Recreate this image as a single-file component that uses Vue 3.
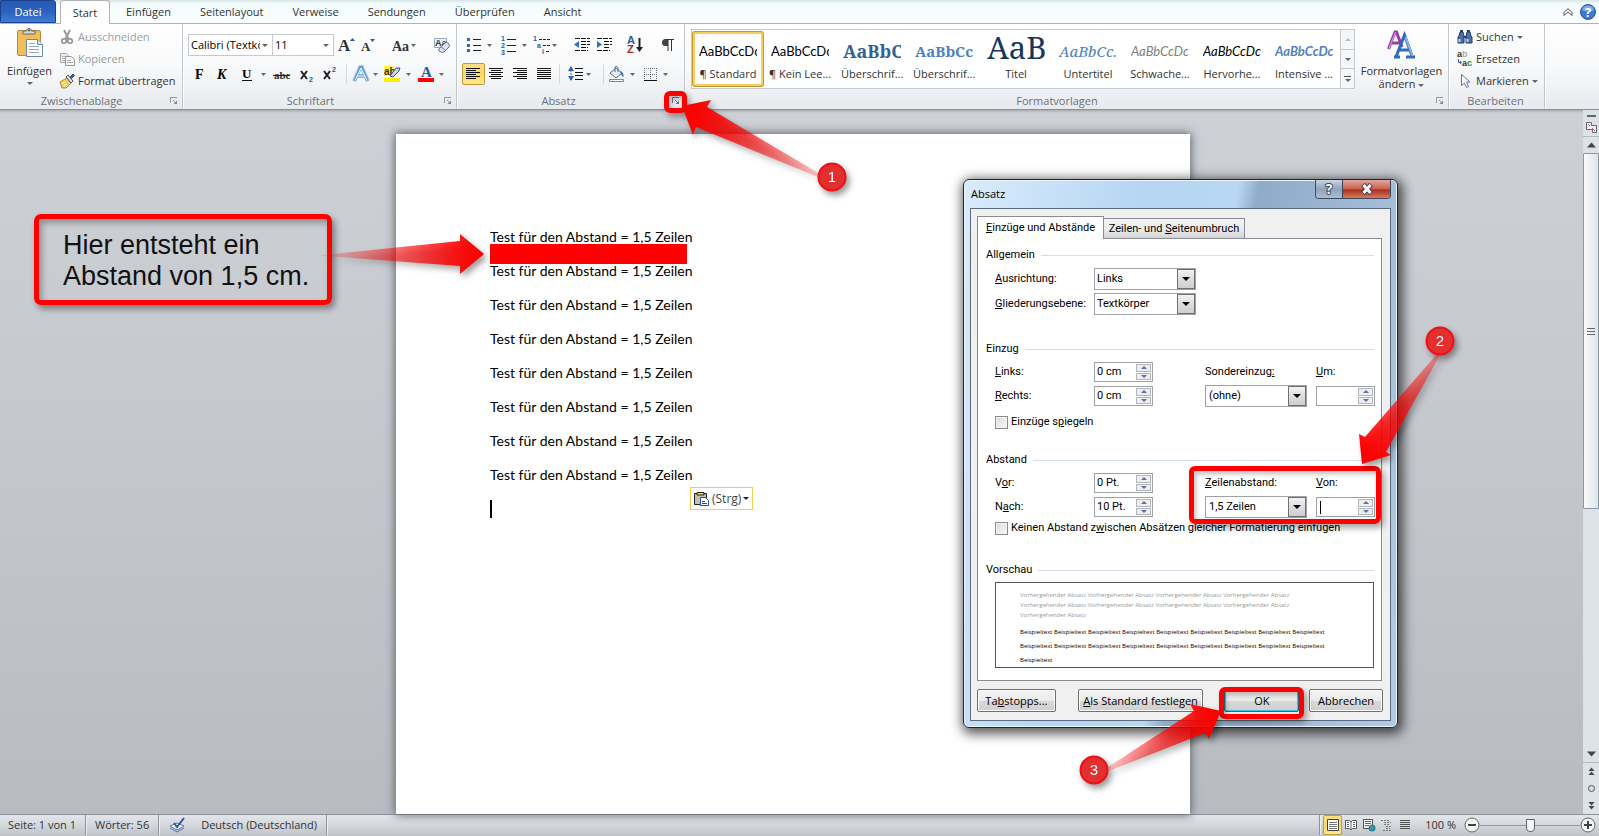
<script setup>
import { ref } from 'vue'

const tabs = ['Einfügen', 'Seitenlayout', 'Verweise', 'Sendungen', 'Überprüfen', 'Ansicht']
const styles = [
  { sample: 'AaBbCcDc', name: '¶ Standard', kind: 'normal', active: true },
  { sample: 'AaBbCcDc', name: '¶ Kein Lee...', kind: 'normal' },
  { sample: 'AaBbCc', name: 'Überschrif...', kind: 'heading1' },
  { sample: 'AaBbCc', name: 'Überschrif...', kind: 'heading2' },
  { sample: 'AaB', name: 'Titel', kind: 'title' },
  { sample: 'AaBbCc.', name: 'Untertitel', kind: 'subtitle' },
  { sample: 'AaBbCcDc', name: 'Schwache...', kind: 'weak' },
  { sample: 'AaBbCcDc', name: 'Hervorhe...', kind: 'emphasis' },
  { sample: 'AaBbCcDc', name: 'Intensive ...', kind: 'intense' }
]
const lines = Array(8).fill('Test für den Abstand = 1,5 Zeilen')
const before = 'Vorhergehender Absatz '
const sample = 'Beispieltext '
const zoom = ref(50)
const font = ref('Calibri (Textkörper)')
const size = ref('11')
const links = ref('0 cm')
const rechts = ref('0 cm')
const um = ref('')
const vor = ref('0 Pt.')
const nach = ref('10 Pt.')
const von = ref('')
</script>

<template>
  <div class="word">
    <nav class="tabs">
      <button class="file">Datei</button>
      <button class="tab current">Start</button>
      <button v-for="t in tabs" :key="t" class="tab">{{ t }}</button>
      <span class="fill"></span>
      <button class="bare" aria-label="Menüband minimieren">
        <svg width="14" height="14" viewBox="0 0 14 14"><path d="M3 7.500 7 3.500l4 4v3L7 7l-4 3.500z" fill="#fff" stroke="#555" /></svg>
      </button>
      <button class="bare" aria-label="Hilfe">
        <svg width="18" height="18" viewBox="0 0 18 18"><circle cx="9" cy="9" r="7.500" fill="#3f78cf" stroke="#2757a5" /><path d="M3 7a6.300 6.300 0 0 1 12 0q-6 3-12 0" fill="#7fa8e6" /><text x="9" y="13.500" text-anchor="middle" class="help-mark">?</text></svg>
      </button>
    </nav>

    <header class="ribbon">
      <section class="group clip">
        <div class="content">
          <button class="big paste">
            <svg width="30" height="32" viewBox="0 0 30 32">
              <rect x="2.500" y="3.500" width="23" height="25" rx="1.500" fill="#efbf5c" stroke="#b98a38" />
              <path d="M8 7V4h3.500a2.500 2.500 0 0 1 5 0H20v3z" fill="#d7d9dd" stroke="#666" />
              <circle cx="14" cy="3.500" r="1" fill="#444" />
              <path d="M11.500 12.500h11l5 5v12h-16z" fill="#fff" stroke="#7186a3" /><path d="M22.500 12.500v5h5" fill="#dce6f3" stroke="#7186a3" />
              <path d="M14 16.500h6M14 19.500h10M14 22.500h10M14 25.500h10" stroke="#8ea9cc" />
            </svg>
            <span>Einfügen</span>
            <i class="caret"></i>
          </button>
          <div class="stack">
            <button class="small off">
              <svg width="16" height="16" viewBox="0 0 16 16"><path d="M5 1l4.500 9M11 1 6.500 10" stroke="#9a9a9a" stroke-width="2" /><circle cx="5" cy="12" r="2.300" fill="none" stroke="#8d8d8d" stroke-width="1.500" /><circle cx="11" cy="12" r="2.300" fill="none" stroke="#8d8d8d" stroke-width="1.500" /></svg>
              Ausschneiden
            </button>
            <button class="small off">
              <svg width="16" height="16" viewBox="0 0 16 16"><path d="M1.500 2.500h6l2 2v7h-8z" fill="#ececec" stroke="#a5a5a5" /><path d="M3 5.500h4M3 7.500h3M3 9.500h3" stroke="#b5b5b5" /><path d="M6.500 5.500h6l3 3v6h-9z" fill="#f6f6f6" stroke="#999" /><path d="M8 9.500h4M8 11.500h6" stroke="#aaa" /></svg>
              Kopieren
            </button>
            <button class="small">
              <svg width="16" height="16" viewBox="0 0 16 16"><path d="M1 9l7-4 4 5-5 5H3z" fill="#f0cf6b" stroke="#b58b32" /><path d="M3 11l3-2M5 13l3-2" stroke="#fff3bd" /><path d="M7 4l2-2 5 6-2 2z" fill="#dfe3ec" stroke="#555" /><path d="M11 4l3-3 1.500 1.500-3 3z" fill="#4863b0" stroke="#31407c" /></svg>
              Format übertragen
            </button>
          </div>
        </div>
        <footer><span>Zwischenablage</span><button class="launch" aria-label="Zwischenablage öffnen"><svg width="8" height="8" viewBox="0 0 8 8"><path d="M.5 6V.5H7M3 3l3 3" fill="none" stroke="#999" /><path d="M7 3.500V7H3.500z" fill="#888" /></svg></button></footer>
      </section>

      <section class="group fonts">
        <div class="content rows">
          <div class="row">
            <label class="combo family"><input v-model="font" aria-label="Schriftart" /><i class="caret"></i></label>
            <label class="combo size"><input v-model="size" aria-label="Schriftgrad" /><i class="caret"></i></label>
            <button class="tool" aria-label="Schriftart vergrößern"><svg width="25" height="22" viewBox="0 0 25 22"><text x="4" y="17" class="serif s16 ink">A</text><path d="M16 7h5l-2.500-3z" fill="#2d58a8" /></svg></button>
            <button class="tool" aria-label="Schriftart verkleinern"><svg width="22" height="22" viewBox="0 0 22 22"><text x="2" y="17" class="serif s12 ink">A</text><path d="M11 5h5l-2.500 3z" fill="#2d58a8" /></svg></button>
            <i class="bar"></i>
            <button class="tool" aria-label="Groß-/Kleinschreibung"><svg width="36" height="22" viewBox="0 0 36 22"><text x="5" y="17" class="serif s13 ink">Aa</text><path d="M24 10h5l-2.500 3z" fill="#666" /></svg></button>
            <i class="bar"></i>
            <button class="tool" aria-label="Formatierung löschen"><svg width="26" height="22" viewBox="0 0 26 22"><path d="M5.500 4.500h12v9h-12z" fill="#eef3fb" stroke="#8fa6c9" /><text x="6" y="12" class="sans s8 ink">Aa</text><path d="M10 15l6-6q1.500-1 3 0l1 1q1 1.500 0 3l-5 5q-2 1-3 0l-2-1q-1-1 0-2z" fill="#dbe4f4" stroke="#5974a5" /><path d="M12 12.500l4 4" stroke="#5974a5" /></svg></button>
          </div>
          <div class="row">
            <button class="tool" aria-label="Fett"><svg width="23" height="22" viewBox="0 0 23 22"><text x="7" y="16" class="serif s13 blk">F</text></svg></button>
            <button class="tool" aria-label="Kursiv"><svg width="24" height="22" viewBox="0 0 24 22"><text x="6" y="16" class="serif s13 blk ital">K</text></svg></button>
            <button class="tool" aria-label="Unterstrichen"><svg width="36" height="22" viewBox="0 0 36 22"><text x="7" y="15" class="serif s12 blk">U</text><path d="M7 17.500h10" stroke="#111" /><path d="M26 10h5l-2.500 3z" fill="#666" /></svg></button>
            <button class="tool" aria-label="Durchgestrichen"><svg width="26" height="22" viewBox="0 0 26 22"><text x="3" y="16" class="serif s9 ink">abc</text><path d="M2 12.500h17" stroke="#222" /></svg></button>
            <button class="tool" aria-label="Tiefgestellt"><svg width="24" height="22" viewBox="0 0 24 22"><path d="M4 8l6 8M10 8l-6 8" stroke="#222" stroke-width="2" /><text x="12" y="19" class="sans s7 blue">2</text></svg></button>
            <button class="tool" aria-label="Hochgestellt"><svg width="22" height="22" viewBox="0 0 22 22"><path d="M3 8l6 8M9 8l-6 8" stroke="#222" stroke-width="2" /><text x="11" y="9" class="sans s7 blue">2</text></svg></button>
            <i class="bar"></i>
            <button class="tool" aria-label="Texteffekte"><svg width="30" height="22" viewBox="0 0 30 22"><path d="M4 18L10 4h2l6 14M7 13h8" fill="none" stroke="#a9d1f3" stroke-width="4" /><path d="M4.500 18L10.500 4.500h1L17.500 18M7 13h8" fill="none" stroke="#5b9bd5" stroke-width="3" /><path d="M5 17.500L11 5l6 12.500M7 13h8" fill="none" stroke="#fff" /><path d="M23 10h5l-2.500 3z" fill="#666" /></svg></button>
            <button class="tool" aria-label="Texthervorhebungsfarbe"><svg width="35" height="22" viewBox="0 0 35 22"><path d="M4 3h10v10H4z" fill="#fff23a" /><text x="4" y="12" class="sans s10 ink">ab</text><path d="M10 13l6-8 4 0-1 3-6 6z" fill="#c9d3e6" stroke="#3e4f77" /><path d="M4 15h16v4H4z" fill="#ffef00" /><path d="M26 10h5l-2.500 3z" fill="#666" /></svg></button>
            <button class="tool" aria-label="Schriftfarbe"><svg width="32" height="22" viewBox="0 0 32 22"><text x="6" y="14" class="serif s14 blue">A</text><path d="M3 15h16v4H3z" fill="#f00" /><path d="M24 10h5l-2.500 3z" fill="#666" /></svg></button>
          </div>
        </div>
        <footer><span>Schriftart</span><button class="launch" aria-label="Schriftart öffnen"><svg width="8" height="8" viewBox="0 0 8 8"><path d="M.5 6V.5H7M3 3l3 3" fill="none" stroke="#999" /><path d="M7 3.500V7H3.500z" fill="#888" /></svg></button></footer>
      </section>

      <section class="group para">
        <div class="content rows">
          <div class="row">
            <button class="tool" aria-label="Aufzählungszeichen"><svg width="35" height="22" viewBox="0 0 35 22"><path d="M5 4h3v3H5zM5 10h3v3H5zM5 15h3v3H5z" fill="#3766b5" /><path d="M11 5.500h8M11 11.500h8M11 16.500h8" stroke="#222" /><path d="M25 10h5l-2.500 3z" fill="#666" /></svg></button>
            <button class="tool" aria-label="Nummerierung"><svg width="34" height="22" viewBox="0 0 34 22"><text x="4" y="7" class="sans s7 blue">1</text><text x="4" y="14" class="sans s7 blue">2</text><text x="4" y="21" class="sans s7 blue">3</text><path d="M10 5.500h9M10 11.500h9M10 17.500h9" stroke="#222" /><path d="M25 10h5l-2.500 3z" fill="#666" /></svg></button>
            <button class="tool" aria-label="Liste mit mehreren Ebenen"><svg width="34" height="22" viewBox="0 0 34 22"><text x="2" y="7" class="sans s7 blue">1</text><text x="6" y="14" class="sans s7 blue">a</text><text x="11" y="20" class="sans s7 blue">i</text><path d="M8 5.500h11M12 11.500h7M15 17.500h4" stroke="#222" stroke-dasharray="3 1" /><path d="M21 10h5l-2.500 3z" fill="#666" /></svg></button>
            <i class="bar"></i>
            <button class="tool" aria-label="Einzug verkleinern"><svg width="22" height="22" viewBox="0 0 22 22"><path d="M4 4.500h15M10 7.500h9M10 10.500h9M10 13.500h7M4 16.500h13" stroke="#111" stroke-dasharray="5 1" /><path d="M8 7v7l-5-3.500z" fill="#2f6fd0" /></svg></button>
            <button class="tool" aria-label="Einzug vergrößern"><svg width="23" height="22" viewBox="0 0 23 22"><path d="M4 4.500h15M11 7.500h8M11 10.500h8M11 13.500h6M4 16.500h13" stroke="#111" stroke-dasharray="5 1" /><path d="M4 7v7l5-3.500z" fill="#2f6fd0" /></svg></button>
            <i class="bar"></i>
            <button class="tool" aria-label="Sortieren"><svg width="28" height="22" viewBox="0 0 28 22"><text x="5" y="10" class="sans s9 blue">A</text><text x="5" y="19" class="sans s9 red">Z</text><path d="M17.500 4v12" stroke="#222" stroke-width="2" /><path d="M14 13h7l-3.500 5z" fill="#222" /></svg></button>
            <i class="bar"></i>
            <button class="tool" aria-label="Alle anzeigen"><svg width="24" height="22" viewBox="0 0 24 22"><path d="M12 5H9.500a3.500 3.500 0 0 0 0 7H12z" fill="#444" /><path d="M12 5v12M15.500 5v12M9 5.500h9" stroke="#333" /></svg></button>
          </div>
          <div class="row">
            <button class="tool on" aria-label="Linksbündig"><svg width="21" height="20" viewBox="0 0 21 20"><path d="M3 4.500h14M3 6.500h10M3 8.500h14M3 10.500h10M3 12.500h14M3 14.500h10" stroke="#111" /></svg></button>
            <button class="tool" aria-label="Zentriert"><svg width="23" height="22" viewBox="0 0 23 22"><path d="M4 5.500h14M6 7.500h10M4 9.500h14M6 11.500h10M4 13.500h14M6 15.500h10" stroke="#111" /></svg></button>
            <button class="tool" aria-label="Rechtsbündig"><svg width="24" height="22" viewBox="0 0 24 22"><path d="M5 5.500h14M9 7.500h10M5 9.500h14M9 11.500h10M5 13.500h14M9 15.500h10" stroke="#111" /></svg></button>
            <button class="tool" aria-label="Blocksatz"><svg width="24" height="22" viewBox="0 0 24 22"><path d="M5 5.500h14M5 7.500h14M5 9.500h14M5 11.500h14M5 13.500h14M5 15.500h14" stroke="#111" /></svg></button>
            <i class="bar"></i>
            <button class="tool" aria-label="Zeilenabstand"><svg width="37" height="22" viewBox="0 0 37 22"><path d="M5 8h6L8 3zM5 13h6l-3 5z" fill="#2f62b5" /><path d="M8 7v7" stroke="#2f62b5" stroke-dasharray="2 1" /><path d="M12 5.500h8M12 9.500h8M12 12.500h8M12 16.500h8" stroke="#111" /><path d="M23 10h5l-2.500 3z" fill="#666" /></svg></button>
            <i class="bar"></i>
            <button class="tool" aria-label="Schattierung"><svg width="34" height="22" viewBox="0 0 34 22"><path d="M3 10l6-5 6 5-6 5z" fill="#e8edf5" stroke="#54698f" /><path d="M8 9V4q2-2 3 1v4" fill="none" stroke="#54698f" /><path d="M13 8q4 1 3.500 6-2-1-3-4z" fill="#2f6fd0" /><path d="M2.500 16.500h14v2h-14z" fill="#fff" stroke="#888" /><path d="M23 10h5l-2.500 3z" fill="#666" /></svg></button>
            <button class="tool" aria-label="Rahmen"><svg width="32" height="22" viewBox="0 0 32 22"><path d="M3 5.500h13M3 11.500h13M3.500 5v12M9.500 5v12M15.500 5v12" stroke="#667" stroke-dasharray="1 1" /><path d="M3 17.500h13" stroke="#111" /><path d="M22 10h5l-2.500 3z" fill="#666" /></svg></button>
          </div>
        </div>
        <footer><span>Absatz</span><button class="launch" aria-label="Absatz öffnen"><svg width="8" height="8" viewBox="0 0 8 8"><path d="M.5 6V.5H7M3 3l3 3" fill="none" stroke="#777" /><path d="M7 3.500V7H3.500z" fill="#777" /></svg></button></footer>
      </section>

      <section class="group looks">
        <div class="content">
          <div class="gallery">
            <button v-for="(s, i) in styles" :key="i" class="look" :class="{ picked: s.active }">
              <span class="sample" :class="s.kind">{{ s.sample }}</span>
              <span class="name">{{ s.name }}</span>
            </button>
            <div class="scroll">
              <button aria-label="Nach oben"><i class="caret up faint"></i></button>
              <button aria-label="Nach unten"><i class="caret"></i></button>
              <button aria-label="Weitere"><i class="dash"></i><i class="caret"></i></button>
            </div>
          </div>
          <button class="big change">
            <svg width="32" height="30" viewBox="0 0 32 30"><path d="M2.500 20L9 3h1.500L16 18M5 14h9" fill="none" stroke="#9b3fa5" stroke-width="3" /><path d="M3 19.500L9.500 3" stroke="#e7a3ee" /><path d="M8 28h6M20 28h9M10 28L18.500 6l8 22M13 21h11" fill="none" stroke="#2f6abf" stroke-width="3" /><path d="M19.500 8l7 19" stroke="#8cb8ee" stroke-width="2" /></svg>
            <span>Formatvorlagen</span>
            <span>ändern <i class="caret"></i></span>
          </button>
        </div>
        <footer><span>Formatvorlagen</span><button class="launch" aria-label="Formatvorlagen öffnen"><svg width="8" height="8" viewBox="0 0 8 8"><path d="M.5 6V.5H7M3 3l3 3" fill="none" stroke="#999" /><path d="M7 3.500V7H3.500z" fill="#888" /></svg></button></footer>
      </section>

      <section class="group edit">
        <div class="content">
          <div class="stack">
            <button class="small"><svg width="16" height="16" viewBox="0 0 16 16"><path d="M2 7l1-4h3l1 4v7H1V8zM9 7l1-4h3l1 4 1 1v6H9z" fill="#4a6ea9" stroke="#24406f" /><path d="M3 2h3M10 2h3M6.500 8h3" stroke="#24406f" stroke-width="2" /><path d="M2.500 10v3M10.500 10v3" stroke="#c5d6ee" stroke-width="2" /></svg>Suchen <i class="caret"></i></button>
            <button class="small"><svg width="16" height="16" viewBox="0 0 16 16"><text x="0" y="6" class="sans s8 ink">a</text><text x="5" y="6" class="sans s8 pale">b</text><text x="5" y="15" class="sans s8 ink">a</text><text x="10" y="15" class="sans s8 green">c</text><path d="M1.500 8v3.500H4" fill="none" stroke="#2f62b5" /><path d="M3 9.500v4l2-2z" fill="#2f62b5" /></svg>Ersetzen</button>
            <button class="small"><svg width="16" height="16" viewBox="0 0 16 16"><path d="M4.500 1.500v11l3-2.500 2 4.500 2-1-2-4.500h3.500z" fill="#fff" stroke="#5a76a8" /></svg>Markieren <i class="caret"></i></button>
          </div>
        </div>
        <footer><span>Bearbeiten</span></footer>
      </section>
    </header>

    <main class="desk">
      <div class="canvas">
        <article class="page">
          <p v-for="(l, i) in lines" :key="i" :class="{ gap: i === 0 }">{{ l }}</p>
          <p class="cursor"><i></i></p>
          <button class="pasteopt">
            <svg width="17" height="16" viewBox="0 0 17 16"><path d="M1.500 2.500h12v11h-12z" fill="#c9bfa8" stroke="#222" /><path d="M4 4V1.500h7V4z" fill="#f5d442" stroke="#222" /><path d="M7.500 6.500h5l3 3v5h-8z" fill="#fff" stroke="#1552c0" /><path d="M9 10.500h3M9 12.500h5" stroke="#1552c0" /></svg>
            (Strg) <i class="caret dark"></i>
          </button>
        </article>
      </div>
      <aside class="vscroll">
        <i class="split"></i>
        <button class="ruler" aria-label="Lineal"><svg width="13" height="13" viewBox="0 0 13 13"><path d="M1.500 1.500h5v3h5v7h-4v-3h-6z" fill="#f4eef2" stroke="#667" /><path d="M3 3l2 2M7 7l3 3" stroke="#a66" /></svg></button>
        <button class="arrow" aria-label="Nach oben"><svg width="11" height="6" viewBox="0 0 11 6"><path d="M1 5.500h9L5.500.5z" fill="#444" /></svg></button>
        <div class="thumb"><i></i><i></i><i></i></div>
        <div class="track"></div>
        <button class="arrow down" aria-label="Nach unten"><svg width="11" height="6" viewBox="0 0 11 6"><path d="M1 .5h9L5.500 5.500z" fill="#444" /></svg></button>
        <button class="jump" aria-label="Vorherige Seite"><svg width="9" height="9" viewBox="0 0 9 9"><path d="M1.500 4h6l-3-3.500zM1.500 8h6l-3-3.500z" fill="#444" /></svg></button>
        <button class="jump" aria-label="Browseobjekt"><svg width="9" height="9" viewBox="0 0 9 9"><circle cx="4.500" cy="4.500" r="3" fill="#ddd" stroke="#555" /></svg></button>
        <button class="jump" aria-label="Nächste Seite"><svg width="9" height="9" viewBox="0 0 9 9"><path d="M1.500 1h6l-3 3.500zM1.500 5h6l-3 3.500z" fill="#444" /></svg></button>
      </aside>
    </main>

    <footer class="status">
      <button class="cell">Seite: 1 von 1</button><i class="sep"></i>
      <button class="cell">Wörter: 56</button><i class="sep"></i>
      <button class="cell spell" aria-label="Rechtschreibung"><svg width="18" height="16" viewBox="0 0 18 16"><path d="M2 9l7-3 7 3-7 4z" fill="#fff" stroke="#5573ab" /><path d="M2 11l7 4 7-4" fill="none" stroke="#5573ab" /><path d="M6 6l3 4 7-9" fill="none" stroke="#2f55b0" stroke-width="2" /></svg></button>
      <button class="cell">Deutsch (Deutschland)</button><i class="sep"></i>
      <span class="fill"></span>
      <i class="sep"></i>
      <button class="view on" aria-label="Seitenlayout"><svg width="14" height="14" viewBox="0 0 14 14"><path d="M1.500 1.500h11v11h-11z" fill="#fff" stroke="#444" /><path d="M3 4.500h8M3 6.500h8M3 8.500h8M3 10.500h8" stroke="#777" /></svg></button>
      <button class="view" aria-label="Vollbild-Lesemodus"><svg width="14" height="14" viewBox="0 0 14 14"><path d="M1.500 2.500h4l1.500 1.500 1.500-1.500h4v8h-4L7 12l-1.500-1.500h-4z" fill="#fff" stroke="#555" /><path d="M7 4v8M3 4.500h2M3 6.500h2M3 8.500h2M9 4.500h2M9 6.500h2M9 8.500h2" stroke="#666" /></svg></button>
      <button class="view" aria-label="Weblayout"><svg width="14" height="14" viewBox="0 0 14 14"><path d="M1.500 1.500h9v9h-9z" fill="#fff" stroke="#555" /><path d="M3 3.500h6M3 5.500h6M3 7.500h4" stroke="#666" /><circle cx="10" cy="10" r="3.500" fill="#2f7fae" /><path d="M8 9q2-2 3 0t-1 3" fill="#53a65a" /></svg></button>
      <button class="view" aria-label="Gliederung"><svg width="14" height="14" viewBox="0 0 14 14"><path d="M1 2.500h8M4 4.500h7M4 6.500h5M6 8.500h6M6 10.500h4M3 12.500h8" stroke="#777" stroke-dasharray="2 1" /></svg></button>
      <button class="view" aria-label="Entwurf"><svg width="14" height="14" viewBox="0 0 14 14"><path d="M2 2.500h10M2 4.500h10M2 6.500h10M2 8.500h10M2 10.500h10" stroke="#555" /></svg></button>
      <button class="cell percent">100 %</button>
      <button class="round" aria-label="Verkleinern"><svg width="16" height="16" viewBox="0 0 16 16"><circle cx="8" cy="8" r="7" fill="#f4f5f7" stroke="#666" /><path d="M4 8h8" stroke="#444" stroke-width="2" /></svg></button>
      <input v-model="zoom" type="range" class="zoom" min="0" max="100" aria-label="Zoom" />
      <button class="round" aria-label="Vergrößern"><svg width="16" height="16" viewBox="0 0 16 16"><circle cx="8" cy="8" r="7" fill="#f4f5f7" stroke="#666" /><path d="M4 8h8M8 4v8" stroke="#444" stroke-width="2" /></svg></button>
    </footer>

    <div class="dialog" role="dialog" aria-labelledby="dlg-title">
      <div class="caption">
        <span id="dlg-title">Absatz</span>
        <div class="winbtns">
          <button class="ask" aria-label="Hilfe"><svg width="12" height="14" viewBox="0 0 12 14"><text x="6" y="12" text-anchor="middle" class="q">?</text></svg></button>
          <button class="close" aria-label="Schließen"><svg width="14" height="12" viewBox="0 0 14 12"><path d="M3 1.500l8 9M11 1.500l-8 9" stroke="#4c3a4c" stroke-width="5" /><path d="M3.500 2l7 8M10.500 2l-7 8" stroke="#fff" stroke-width="3" /></svg></button>
        </div>
      </div>
      <div class="client">
        <div class="dtabs">
          <button class="dtab current"><u>E</u>inzüge und Abstände</button>
          <button class="dtab">Zeilen- und <u>S</u>eitenumbruch</button>
        </div>
        <div class="panel">
          <h3>Allgemein</h3>
          <div class="fields tall">
            <label for="align"><u>A</u>usrichtung:</label>
            <div class="select"><select id="align"><option>Links</option></select><i></i></div>
            <label for="level" class="first"><u>G</u>liederungsebene:</label>
            <div class="select"><select id="level"><option>Textkörper</option></select><i></i></div>
          </div>
          <h3 class="far">Einzug</h3>
          <div class="fields">
            <label for="li"><u>L</u>inks:</label>
            <div class="spin"><input id="li" v-model="links" /><div><button aria-label="Mehr"></button><button aria-label="Weniger"></button></div></div>
            <label for="special">Sondereinzug<u>:</u></label>
            <label for="um"><u>U</u>m:</label>
            <label for="re"><u>R</u>echts:</label>
            <div class="spin"><input id="re" v-model="rechts" /><div><button aria-label="Mehr"></button><button aria-label="Weniger"></button></div></div>
            <div class="select pad"><select id="special"><option>(ohne)</option></select><i></i></div>
            <div class="spin"><input id="um" v-model="um" /><div><button aria-label="Mehr"></button><button aria-label="Weniger"></button></div></div>
          </div>
          <label class="check mirror"><input type="checkbox" /><span>Einzüge s<u>p</u>iegeln</span></label>
          <h3 class="far">Abstand</h3>
          <div class="fields">
            <label for="vor">V<u>o</u>r:</label>
            <div class="spin"><input id="vor" v-model="vor" /><div><button aria-label="Mehr"></button><button aria-label="Weniger"></button></div></div>
            <label for="spacing"><u>Z</u>eilenabstand:</label>
            <label for="von"><u>V</u>on:</label>
            <label for="nach">N<u>a</u>ch:</label>
            <div class="spin"><input id="nach" v-model="nach" /><div><button aria-label="Mehr"></button><button aria-label="Weniger"></button></div></div>
            <div class="select pad"><select id="spacing"><option>1,5 Zeilen</option></select><i></i></div>
            <div class="spin typing"><input id="von" v-model="von" /><div><button aria-label="Mehr"></button><button aria-label="Weniger"></button></div></div>
          </div>
          <label class="check"><input type="checkbox" /><span>Keinen Abstand z<u>w</u>ischen Absätzen gleicher Formatierung einfügen</span></label>
          <h3 class="last">Vorschau</h3>
          <div class="preview">
            <p class="ghost">{{ before.repeat(4) }}<br />{{ before.repeat(4) }}<br />{{ before }}</p>
            <p class="real">{{ sample.repeat(9) }}<br />{{ sample.repeat(9) }}<br />{{ sample }}</p>
          </div>
        </div>
        <div class="actions">
          <button class="stops">Ta<u>b</u>stopps...</button>
          <button class="std"><u>A</u>ls Standard festlegen</button>
          <button class="ok">OK</button>
          <button class="cancel">Abbrechen</button>
        </div>
      </div>
    </div>

    <div class="note">Hier entsteht ein<br />Abstand von 1,5 cm.</div>
    <div class="frame launcher"></div>
    <div class="frame spacing"></div>
    <div class="frame confirm"></div>
    <svg class="overlay" width="1599" height="836" viewBox="0 0 1599 836">
      <defs>
        <linearGradient id="g0" gradientUnits="userSpaceOnUse" x1="318" y1="0" x2="476" y2="0"><stop offset="0" stop-color="#f00" stop-opacity=".1" /><stop offset="1" stop-color="#f00" /></linearGradient>
        <linearGradient id="g1" gradientUnits="userSpaceOnUse" x1="822" y1="176" x2="694" y2="112"><stop offset="0" stop-color="#f00" stop-opacity=".2" /><stop offset="1" stop-color="#f00" /></linearGradient>
        <linearGradient id="g2" gradientUnits="userSpaceOnUse" x1="1438" y1="352" x2="1368" y2="454"><stop offset="0" stop-color="#f00" stop-opacity=".3" /><stop offset="1" stop-color="#f00" /></linearGradient>
        <linearGradient id="g3" gradientUnits="userSpaceOnUse" x1="1106" y1="770" x2="1212" y2="716"><stop offset="0" stop-color="#f00" stop-opacity=".2" /><stop offset="1" stop-color="#f00" /></linearGradient>
      </defs>
      <path d="M318 255.500L460 241v-7l24 20-24 20v-8z" fill="url(#g0)" />
      <path d="M820 174L707 107l4-7-29 6 11 29 3-8 122 50z" fill="url(#g1)" />
      <path d="M1437 354L1365 437l-6-3 3 30 29-9-5-3 54-97z" fill="url(#g2)" />
      <path d="M1108 767L1194 711l-4-7 31 7-12 28-4-6-96 38z" fill="url(#g3)" />
      <g class="badge">
        <circle cx="832" cy="177" r="13.500" /><text x="832" y="182">1</text>
        <circle cx="1440" cy="341" r="13.500" /><text x="1440" y="346">2</text>
        <circle cx="1094" cy="770" r="13.500" /><text x="1094" y="775">3</text>
      </g>
    </svg>
  </div>
</template>

<style>
html, body, #app { height: 100%; overflow: hidden; }
</style>

<style scoped>
* { box-sizing: border-box; }
.word { position: relative; display: flex; flex-direction: column; height: 100%; font: 11px/16px "Open Sans", "Noto Sans", sans-serif; color: #333; overflow: hidden; }
button { font: inherit; color: inherit; background: none; border: 0; padding: 0; margin: 0; white-space: nowrap; }
input, select { font: inherit; color: inherit; min-width: 0; }
svg { display: block; flex: none; }
.fill { flex: 1; }

.tabs { flex: none; display: flex; align-items: stretch; height: 24px; border-bottom: 1px solid #b0b4ba; background: linear-gradient(#d8e5e6, #f4fcfd 4px, #fafeff); }
.file { width: 56px; margin-right: 4px; color: #fff; background: linear-gradient(#2558b3, #2c62bf 50%, #3f7bd8); border: 1px solid #1a428c; border-radius: 0 3px 0 0; }
.tab { padding: 0 14px; margin-right: 1px; }
.current { background: #fff; }
.tab.current { margin: 0 2px -1px 0; width: 50px; padding: 0; border: 1px solid #b0b4ba; border-bottom: 0; border-radius: 3px 3px 0 0; }
.bare { padding: 0 2px; }
.help-mark { font: bold 13px "Open Sans", sans-serif; fill: #fff; }

.ribbon { flex: none; display: flex; height: 86px; background: linear-gradient(#fff, #f8f9fa 50%, #e7eaee); border-bottom: 1px solid #8b9097; }
.group { display: flex; flex-direction: column; border-right: 1px solid #c3c7cd; box-shadow: 1px 0 #fff; }
.clip { width: 183px; }
.fonts { width: 274px; }
.para { width: 228px; }
.looks { width: 764px; }
.edit { width: 96px; }
.content { flex: 1; display: flex; }
.rows { flex-direction: column; padding: 10px 5px 0; gap: 7px; }
.row { display: flex; height: 22px; align-items: center; }
.group footer { display: flex; align-items: center; height: 16px; padding-right: 2px; color: #6a7078; }
.group footer span { flex: 1; text-align: center; }
.clip footer span, .looks footer span { padding-right: 7px; }
.fonts footer span { padding-right: 6px; }
.para footer span { padding-right: 12px; }
.launch { width: 10px; height: 8px; }
.big { display: flex; flex-direction: column; align-items: center; line-height: 13px; }
.paste { width: 59px; padding-top: 3px; gap: 5px; }
.stack { display: flex; flex-direction: column; padding-top: 2px; }
.small { display: flex; align-items: center; gap: 3px; height: 22px; }
.edit .stack { padding-left: 8px; }
.off { color: #9a9da1; }
.caret { display: inline-block; width: 0; height: 0; border: 3px solid transparent; border-top-color: #666; border-bottom: 0; vertical-align: middle; }
.up { border-top: 0; border-bottom: 3px solid #666; }
.faint { border-bottom-color: #bbb; }
.dark { border-top-color: #222; }
.combo { display: flex; align-items: center; height: 22px; padding-right: 4px; border: 1px solid #c5c8cd; background: #fff; color: #000; }
.combo input { flex: 1; border: 0; padding: 0 2px; background: none; outline: 0; }
.family { width: 85px; }
.size { width: 62px; margin-left: -1px; }
.bar { width: 1px; height: 20px; background: #d5d8dc; margin: 0 3px; }
.tool.on, .view.on { border: 1px solid #c29a3b; border-radius: 2px; background: linear-gradient(#fbe08a, #fdd562 50%, #fde992); }
.serif { font-family: "Liberation Serif", serif; font-weight: bold; }
.sans { font-family: "Liberation Sans", sans-serif; font-weight: bold; }
.ital { font-style: italic; }
.s7 { font-size: 7px; }
.s8 { font-size: 9px; }
.s9 { font-size: 11px; }
.s10 { font-size: 10px; }
.s12 { font-size: 13px; }
.s13 { font-size: 14px; }
.s14 { font-size: 15px; }
.s16 { font-size: 17px; }
.ink { fill: #333; }
.blk { fill: #000; }
.blue { fill: #2a56a5; }
.red { fill: #a22b2b; }
.pale { fill: #aaa; }
.green { fill: #1c8a2c; }

.looks .content { padding: 5px 0 0 6px; }
.gallery { display: flex; height: 60px; border: 1px solid #c5c8cd; background: #fff; }
.look { display: flex; flex-direction: column; width: 72px; padding: 5px; overflow: hidden; }
.look.picked { border: 3px solid #f7cf5a; outline: 1px solid #c4993a; outline-offset: -1px; border-radius: 3px; padding: 2px; margin: 1px 0; height: 56px; }
.look.picked .sample { margin-top: -1px; }
.sample { display: block; width: 58px; margin: 0 auto; height: 28px; line-height: 32px; text-align: left; overflow: hidden; font-family: Lato, sans-serif; font-size: 13px; color: #000; }
.name { display: block; text-align: center; margin-top: 3px; }
.heading1, .heading2, .title, .subtitle { font-family: "Noto Serif", "DejaVu Serif", serif; }
.heading1 { font-size: 18px; font-weight: bold; color: #345f95; }
.heading2 { font-size: 15px; font-weight: bold; color: #4f81bd; }
.title { font-size: 31px; color: #17365d; line-height: 24px; }
.subtitle { font-size: 15px; font-style: italic; color: #4f81bd; }
.weak { font-style: italic; color: #808080; }
.emphasis { font-style: italic; }
.intense { font-style: italic; font-weight: bold; color: #4f81bd; }
.scroll { display: flex; flex-direction: column; width: 14px; border-left: 1px solid #c5c8cd; background: #f4f6f8; }
.scroll button { flex: 1; display: flex; flex-direction: column; align-items: center; justify-content: center; gap: 2px; border-bottom: 1px solid #c5c8cd; }
.scroll button:last-child { border-bottom: 0; }
.dash { width: 7px; height: 1px; background: #555; }
.change { flex: 1; }
.change svg { margin-bottom: 5px; }

.desk { flex: 1; display: flex; min-height: 0; background: linear-gradient(#a9adb2, #cdd0d5 3px, #c6c9ce 40%, #b8bcc1); }
.canvas { flex: 1; display: flex; justify-content: center; padding: 24px 0 0 3px; }
.page { position: relative; width: 794px; padding: 86px 94px 0; background: #fff; box-shadow: 0 0 9px 1px #60656c; font: 14px/34px Lato, sans-serif; color: #000; }
.page p { margin: 0; height: 34px; display: flex; align-items: center; }
.gap { position: relative; }
.gap::after { content: ""; position: absolute; left: 0; top: 24px; width: 197px; height: 20px; background: #f00; }
.cursor i { width: 2px; height: 18px; background: #000; }
.pasteopt { position: absolute; left: 294px; top: 353px; display: flex; align-items: center; gap: 2px; height: 23px; padding: 0 3px 0 2px; border: 1px solid #f0cf4f; background: #fff; font: 12px/16px "Open Sans", sans-serif; color: #444; }
.vscroll { width: 16px; display: flex; flex-direction: column; align-items: center; background: #dde1e8; }
.split { width: 9px; height: 2px; margin-top: 5px; background: #666; flex: none; }
.ruler { padding: 4px 0 2px; }
.arrow { height: 17px; width: 16px; display: flex; align-items: center; justify-content: center; border-top: 1px solid #b5bac2; flex: none; }
.arrow.down { border-top: 0; border-bottom: 1px solid #b5bac2; }
.thumb { width: 16px; flex: 355; display: flex; flex-direction: column; align-items: center; justify-content: center; gap: 2px; border: 1px solid #8d97a6; border-radius: 1px; background: linear-gradient(90deg, #fafbfc, #dfe3ea); }
.thumb i { width: 8px; height: 1px; background: #667; }
.track { flex: 237; }
.jump { height: 17px; display: flex; align-items: center; flex: none; }

.status { flex: none; display: flex; align-items: center; height: 22px; padding: 0 3px 1px 2px; border-top: 1px solid #8c929b; background: linear-gradient(#e3e6ea, #d3d6db 50%, #bfc3c9); }
.status .cell { padding: 0 6px; }
.status .spell { padding: 0 9px 0 6px; }
.sep { width: 1px; height: 20px; background: #8f949c; margin: 0 3px 0 3px; box-shadow: 1px 0 #eee; }
.view { width: 18px; height: 20px; display: flex; align-items: center; justify-content: center; }
.view.on { width: 19px; }
.status .percent { margin-left: 5px; padding-right: 8px; }
.zoom { appearance: none; width: 100px; height: 16px; margin: 0; background: linear-gradient(#8d98ad, #8d98ad) center / 100% 1px no-repeat; }
.zoom::-webkit-slider-thumb { appearance: none; width: 9px; height: 13px; border: 1px solid #5c6472; border-radius: 0 0 4px 4px; background: #f5f6f8; }

.dialog { position: absolute; left: 963px; top: 179px; width: 435px; padding: 0 6px 6px; border: 1px solid #20262e; border-radius: 6px; background: linear-gradient(100deg, #d9ebfb, #b5d5f3 35%, #b9d7f2 52%, #8fabc8 56%, #9fb9d4 75%, #b3cbe4); box-shadow: inset 0 0 0 1px #e9f4fd, 2px 3px 12px 3px rgba(0, 0, 0, .65); font: 11px/14px Roboto, sans-serif; color: #000; }
.caption { display: flex; justify-content: space-between; height: 28px; padding-left: 1px; font: 11px/28px "Open Sans", sans-serif; }
.winbtns { display: flex; height: 19px; border: 1px solid #3e4a5c; border-top: 0; border-radius: 0 0 4px 4px; overflow: hidden; }
.winbtns button { display: flex; align-items: center; justify-content: center; }
.winbtns .ask { width: 27px; background: linear-gradient(#c9d6e4, #8ea4bc 50%, #a9bed3); border-right: 1px solid #3e4a5c; }
.close { width: 47px; background: linear-gradient(#e2a79c, #c9604d 50%, #a8301c 55%, #d87a5f); }
.q { font: bold 14px "Open Sans", sans-serif; fill: #fff; stroke: #445; stroke-width: 2px; paint-order: stroke; }
.client { padding: 7px 7px 8px 6px; border: 1px solid #5a6b7f; background: #f0f0f0; }
.dtabs { display: flex; align-items: flex-end; height: 22px; }
.dtab { height: 20px; width: 142px; border: 1px solid #8b8b95; border-bottom: 0; background: linear-gradient(#f3f3f3, #ececec 50%, #d5d5d5); }
.dtab.current { height: 23px; width: 127px; margin: 0 -1px -1px 0; background: #fff; position: relative; }
.panel { padding: 6px 7px 12px 8px; border: 1px solid #8b8b95; background: #fff; margin-right: 1px; }
h3 { display: flex; align-items: center; gap: 6px; height: 20px; margin: 0 0 1px; font: inherit; }
h3::after { content: ""; flex: 1; height: 1px; background: #d5dfe9; }
.far { margin-top: 20px; }
.tall + .far { margin-top: 23px; }
.last { margin-top: 25px; }
.fields { display: grid; grid-template-columns: 99px 111px 111px 59px; grid-auto-rows: 24px; align-items: center; margin-left: 9px; }
.tall { grid-auto-rows: 25px; }
.first { grid-column: 1; }
.select { display: flex; width: 102px; height: 22px; border: 1px solid #a0a0a8; background: #fff; position: relative; }
.select select { appearance: none; flex: 1; border: 0; padding: 0 20px 0 2px; background: none; outline: 0; }
.select.pad select { padding-left: 3px; }
.select i { position: absolute; right: 0; top: 0; width: 18px; height: 20px; border: 1px solid #707070; background: linear-gradient(#f2f2f2, #ddd 50%, #cfcfcf); pointer-events: none; }
.select i::after { content: ""; position: absolute; left: 4px; top: 7px; border: 4px solid transparent; border-top-color: #000; border-bottom: 0; }
.spin { display: flex; width: 59px; height: 20px; border: 1px solid #a0a0a8; background: #fff; position: relative; }
.spin input { flex: 1; width: 20px; border: 0; padding: 0 2px; background: none; outline: 0; }
.spin div { display: flex; flex-direction: column; gap: 1px; padding: 1px; width: 17px; }
.spin button { flex: 1; display: flex; align-items: center; justify-content: center; border: 1px solid #b5b5bd; background: #eee; }
.spin button::after { content: ""; border: 3px solid transparent; border-top: 0; border-bottom-color: #5a6fae; }
.spin button:last-child::after { border-top: 3px solid #5a6fae; border-bottom: 0; }
.typing::before { content: ""; position: absolute; left: 3px; top: 3px; width: 1px; height: 13px; background: #000; }
.check { display: flex; align-items: center; gap: 3px; height: 14px; margin: 2px 0 0 9px; white-space: nowrap; }
.mirror { margin-top: 7px; }
.mirror + .far { margin-top: 21px; }
.check input { appearance: none; width: 13px; height: 13px; margin: 0; border: 1px solid #8b8b8b; background: linear-gradient(135deg, #d5d8dc, #fafafa); box-shadow: inset 0 0 0 1px #f4f4f4; }
.preview { height: 86px; margin: 2px 0 0 9px; padding: 7px 24px 0; border: 1px solid #555; overflow: hidden; white-space: nowrap; font-family: "Open Sans", sans-serif; }
.preview p { margin: 0; font-size: 6px; line-height: 10px; color: #999; }
.preview .real { margin-top: 5px; line-height: 14px; color: #000; }
.actions { display: flex; margin-top: 8px; font-family: "Open Sans", sans-serif; }
.actions button { height: 23px; border: 1px solid #707070; border-radius: 2px; background: linear-gradient(#f3f3f3, #ebebeb 50%, #d8d8d8 52%, #d0d0d0); box-shadow: inset 0 0 0 1px #fafafa; }
.stops { width: 79px; }
.actions .std { width: 126px; margin: 0 21px 0 22px; }
.ok { width: 75px; }
.actions .ok { border-color: #2c6a8a; box-shadow: inset 0 0 0 1px #3fc0e8; margin-right: 10px; }
.cancel { width: 74px; }

.note { position: absolute; left: 34px; top: 214px; width: 298px; height: 91px; padding: 11px 0 0 24px; border: 5px solid #f00; border-radius: 7px; font: 27px/31px "Liberation Sans", Arial, sans-serif; color: #111; white-space: nowrap; box-shadow: 3px 4px 6px rgba(0, 0, 0, .4), inset 3px 4px 6px rgba(0, 0, 0, .3); }
.frame { position: absolute; border: 5px solid #f00; border-radius: 6px; box-shadow: 3px 4px 6px rgba(0, 0, 0, .35), inset 2px 3px 5px rgba(0, 0, 0, .25); pointer-events: none; }
.launcher { left: 664px; top: 91px; width: 23px; height: 22px; }
.spacing { left: 1189px; top: 466px; width: 192px; height: 58px; }
.confirm { left: 1219px; top: 687px; width: 85px; height: 32px; }
.overlay { position: absolute; left: 0; top: 0; pointer-events: none; filter: drop-shadow(3px 4px 3px rgba(0, 0, 0, .4)); }
.badge circle { fill: #e23030; stroke: #f00f14; stroke-width: 2px; }
.badge text { font: 15px "Liberation Sans", sans-serif; fill: #fff; text-anchor: middle; }
</style>
